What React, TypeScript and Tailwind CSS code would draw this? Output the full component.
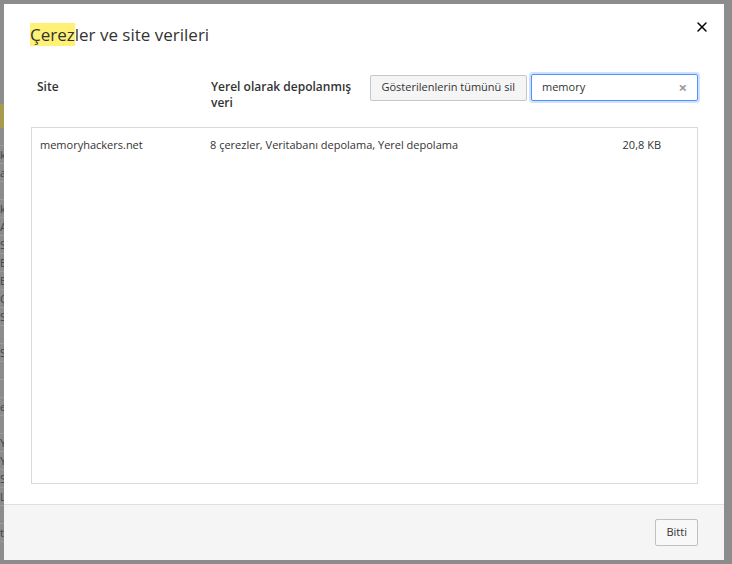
import { X } from "lucide-react";

const BEHIND = ["", "k", "a", "", "k", "A", "S", "B", "B", "Ç", "S", "", "S", "", "", "e", "", "Y", "Y", "S", "L", "", "ti"];

function SearchBox() {
  return (
    <div className="flex h-[27px] w-[167px] items-center rounded-[2px] border border-[#4d90fe] px-[10px] shadow-[0_0_0_2px_#cfe2fc]">
      <input
        readOnly
        value="memory"
        className="min-w-0 flex-1 bg-transparent text-[11px] text-[#333] outline-none"
      />
      <span className="text-[15px] font-bold leading-none text-[#9a9a9a]">×</span>
    </div>
  );
}

export default function App() {
  return (
    <div
      className="flex h-[564px] w-[732px] bg-[#8c8c8c] pt-[4px] pb-[4px] pr-[8px] text-[#333]"
      style={{ fontFamily: '"Open Sans", "Noto Sans", sans-serif' }}
    >
      <div className="flex w-[4px] flex-col overflow-hidden pt-[100px] text-[11px] leading-[18px] text-[#444]">
        <span className="h-[24px] bg-[#a89a4e]" />
        {BEHIND.map((c, i) => (
          <span key={i} className="h-[18px] border-b border-[#9a9a9a]">
            {c}
          </span>
        ))}
      </div>

      <div className="flex flex-1 flex-col bg-white">
        <div className="flex items-start justify-between pl-[26px] pr-[14px] pt-[16px]">
          <h1 className="text-[17px] font-normal leading-[30px] text-[#333]">
            <span className="bg-[#fff176]">Çerez</span>ler ve site verileri
          </h1>
          <X size={16} strokeWidth={2.2} className="-mt-[1px] text-black" />
        </div>

        <div className="mt-[24px] flex items-start pl-[33px] pr-[26px] text-[12px]">
          <div className="w-[174px] pt-[5px] font-semibold leading-[16px]">Site</div>
          <div className="w-[158px] pt-[5px] font-semibold leading-[16px]">
            Yerel olarak depolanmış
            <br />
            veri
          </div>
          <div className="ml-auto flex items-center gap-[4px]">
            <button className="h-[26px] whitespace-nowrap rounded-[2px] border border-[#c6c6c6] bg-[#f5f5f5] px-[11px] text-[11px] text-[#333]">
              Gösterilenlerin tümünü sil
            </button>
            <SearchBox />
          </div>
        </div>

        <div className="mt-[16px] ml-[27px] mr-[26px] h-[357px] border border-[#d9d9d9]">
          <div className="flex items-center px-[8px] pt-[9px] text-[11px] leading-[16px]">
            <span className="w-[170px]">memoryhackers.net</span>
            <span className="flex-1">8 çerezler, Veritabanı depolama, Yerel depolama</span>
            <span className="pr-[28px]">20,8 KB</span>
          </div>
        </div>

        <div className="mt-auto flex h-[56px] items-center justify-end border-t border-[#e0e0e0] bg-[#f5f5f5] pr-[26px]">
          <button className="h-[27px] rounded-[2px] border border-[#c0c0c0] bg-[#f8f8f8] px-[10px] text-[11px] text-[#333]">
            Bitti
          </button>
        </div>
      </div>
    </div>
  );
}
